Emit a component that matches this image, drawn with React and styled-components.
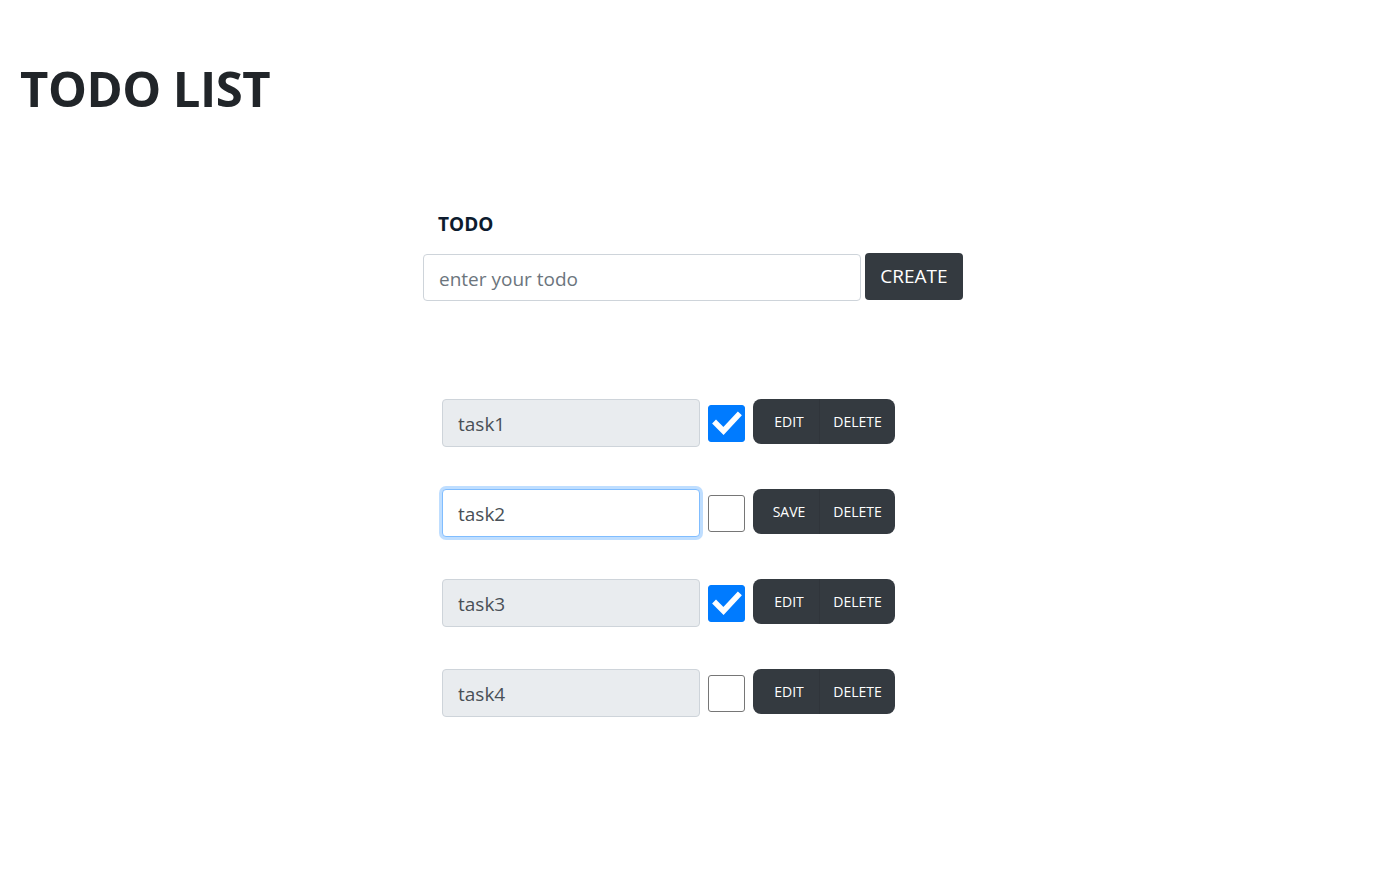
import React from "react";
import styled, { createGlobalStyle } from "styled-components";

const Global = createGlobalStyle`
  body {
    margin: 0;
    background: #fff;
    font-family: "Open Sans", "Noto Sans", sans-serif;
    color: #212529;
  }
  * { box-sizing: border-box; }
`;

const Page = styled.div`
  padding: 59px 20px 40px 20px;
`;

const Title = styled.h1`
  margin: 0;
  font-size: 49px;
  font-weight: 700;
  line-height: 1.2;
  color: #212529;
  letter-spacing: -0.5px;
`;

const Main = styled.div`
  margin-left: 403px;
  margin-top: 93px;
  display: flex;
  flex-direction: column;
`;

const Label = styled.label`
  font-size: 19px;
  font-weight: 700;
  color: #0d1b2e;
  margin-left: 15px;
  line-height: 26px;
`;

const CreateRow = styled.div`
  display: flex;
  align-items: flex-start;
  gap: 4px;
  margin-top: 16px;
`;

const TextInput = styled.input`
  font-family: inherit;
  font-size: 19px;
  color: #495057;
  background: ${(p) => (p.disabled ? "#e9ecef" : "#fff")};
  border: 1px solid ${(p) => (p.$focus ? "#80bdff" : "#ced4da")};
  border-radius: 4px;
  padding: 3px 15px 0 15px;
  width: ${(p) => p.$w}px;
  height: ${(p) => p.$h}px;
  outline: none;
  box-shadow: ${(p) => (p.$focus ? "0 0 0 3px rgba(0,123,255,.25)" : "none")};
  margin-top: ${(p) => p.$mt || 0}px;
  &::placeholder { color: #6c757d; }
  &:disabled { opacity: 1; color: #495057; -webkit-text-fill-color: #495057; }
`;

const DarkButton = styled.button`
  font-family: inherit;
  background: #343a40;
  color: #fff;
  border: none;
  font-size: ${(p) => p.$fs || 14}px;
  height: ${(p) => p.$h}px;
  width: ${(p) => p.$w}px;
  padding: 0;
  border-radius: 4px;
  cursor: pointer;
`;

const List = styled.div`
  margin-top: 98px;
  margin-left: 19px;
  display: flex;
  flex-direction: column;
  gap: 42px;
`;

const TaskRow = styled.div`
  display: flex;
  align-items: flex-start;
`;

const CheckBox = styled.span`
  width: 37px;
  height: 37px;
  margin: 6px 8px 0 8px;
  border-radius: 3px;
  border: 1px solid ${(p) => (p.$checked ? "#007bff" : "#767676")};
  background: ${(p) => (p.$checked ? "#007bff" : "#fff")};
  display: flex;
  align-items: center;
  justify-content: center;
`;

const Group = styled.div`
  display: flex;
  border-radius: 8px;
  overflow: hidden;
  height: 45px;
`;

const GroupButton = styled.button`
  font-family: inherit;
  background: #343a40;
  color: #fff;
  border: none;
  font-size: 14px;
  width: ${(p) => p.$w}px;
  height: 45px;
  padding: 0 0 0 ${(p) => p.$pl || 0}px;
  border-left: ${(p) => (p.$divider ? "1px solid #30353b" : "none")};
  cursor: pointer;
`;

const Check = () => (
  <svg width="32" height="32" viewBox="0 0 32 32">
    <path d="M5 16.5 L12.5 24 L27 8.5" fill="none" stroke="#fff" strokeWidth="5.5" strokeLinecap="square" />
  </svg>
);

const tasks = [
  { name: "task1", checked: true, editing: false },
  { name: "task2", checked: false, editing: true },
  { name: "task3", checked: true, editing: false },
  { name: "task4", checked: false, editing: false },
];

export default function App() {
  return (
    <>
      <Global />
      <Page>
        <Title>TODO LIST</Title>
        <Main>
          <Label>TODO</Label>
          <CreateRow>
            <TextInput $w={438} $h={47} $mt={1} placeholder="enter your todo" />
            <DarkButton $w={98} $h={47} $fs={19}>CREATE</DarkButton>
          </CreateRow>
          <List>
            {tasks.map((t) => (
              <TaskRow key={t.name}>
                <TextInput
                  $w={258}
                  $h={48}
                  defaultValue={t.name}
                  disabled={!t.editing}
                  $focus={t.editing}
                />
                <CheckBox $checked={t.checked}>{t.checked && <Check />}</CheckBox>
                <Group>
                  <GroupButton $w={66} $pl={6}>{t.editing ? "SAVE" : "EDIT"}</GroupButton>
                  <GroupButton $w={76} $divider>DELETE</GroupButton>
                </Group>
              </TaskRow>
            ))}
          </List>
        </Main>
      </Page>
    </>
  );
}
